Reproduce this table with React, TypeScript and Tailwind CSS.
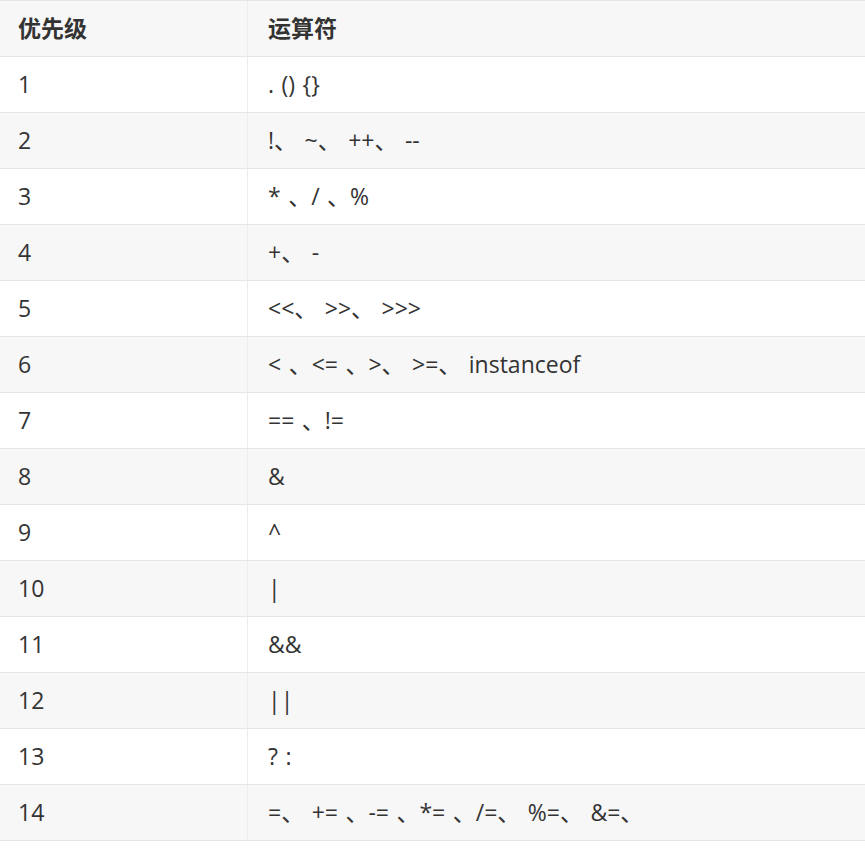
const rows: [string, string][] = [
  ["1", ". () {}"],
  ["2", "!、 ~、 ++、 --"],
  ["3", "* 、/ 、%"],
  ["4", "+、 -"],
  ["5", "<<、 >>、 >>>"],
  ["6", "< 、<= 、>、 >=、 instanceof"],
  ["7", "== 、!="],
  ["8", "&"],
  ["9", "^"],
  ["10", "|"],
  ["11", "&&"],
  ["12", "||"],
  ["13", "? :"],
  ["14", "=、 += 、-= 、*= 、/=、 %=、 &=、"],
];

export default function App() {
  return (
    <div
      className="w-[865px] h-[850px] bg-white text-[#333] text-[23px]"
      style={{ fontFamily: '"Open Sans", "Noto Sans CJK SC", sans-serif' }}
    >
      <div className="border-t border-[#e6e6e6]">
        <div className="flex h-[56px] bg-[#f7f7f7] border-b border-[#e6e6e6] font-bold">
          <div className="w-[248px] shrink-0 flex items-center pl-[18px] border-r border-[#ececec]">
            优先级
          </div>
          <div className="flex-1 flex items-center pl-[20px]">运算符</div>
        </div>
        {rows.map(([level, ops], i) => (
          <div
            key={level}
            className={`flex h-[56px] border-b border-[#e6e6e6] ${
              i % 2 === 1 ? "bg-[#f7f7f7]" : "bg-white"
            }`}
          >
            <div className="w-[248px] shrink-0 flex items-center pl-[18px] border-r border-[#ececec]">
              {level}
            </div>
            <div className="flex-1 flex items-center pl-[20px] whitespace-pre [word-spacing:1.5px]">
              {ops}
            </div>
          </div>
        ))}
      </div>
    </div>
  );
}
